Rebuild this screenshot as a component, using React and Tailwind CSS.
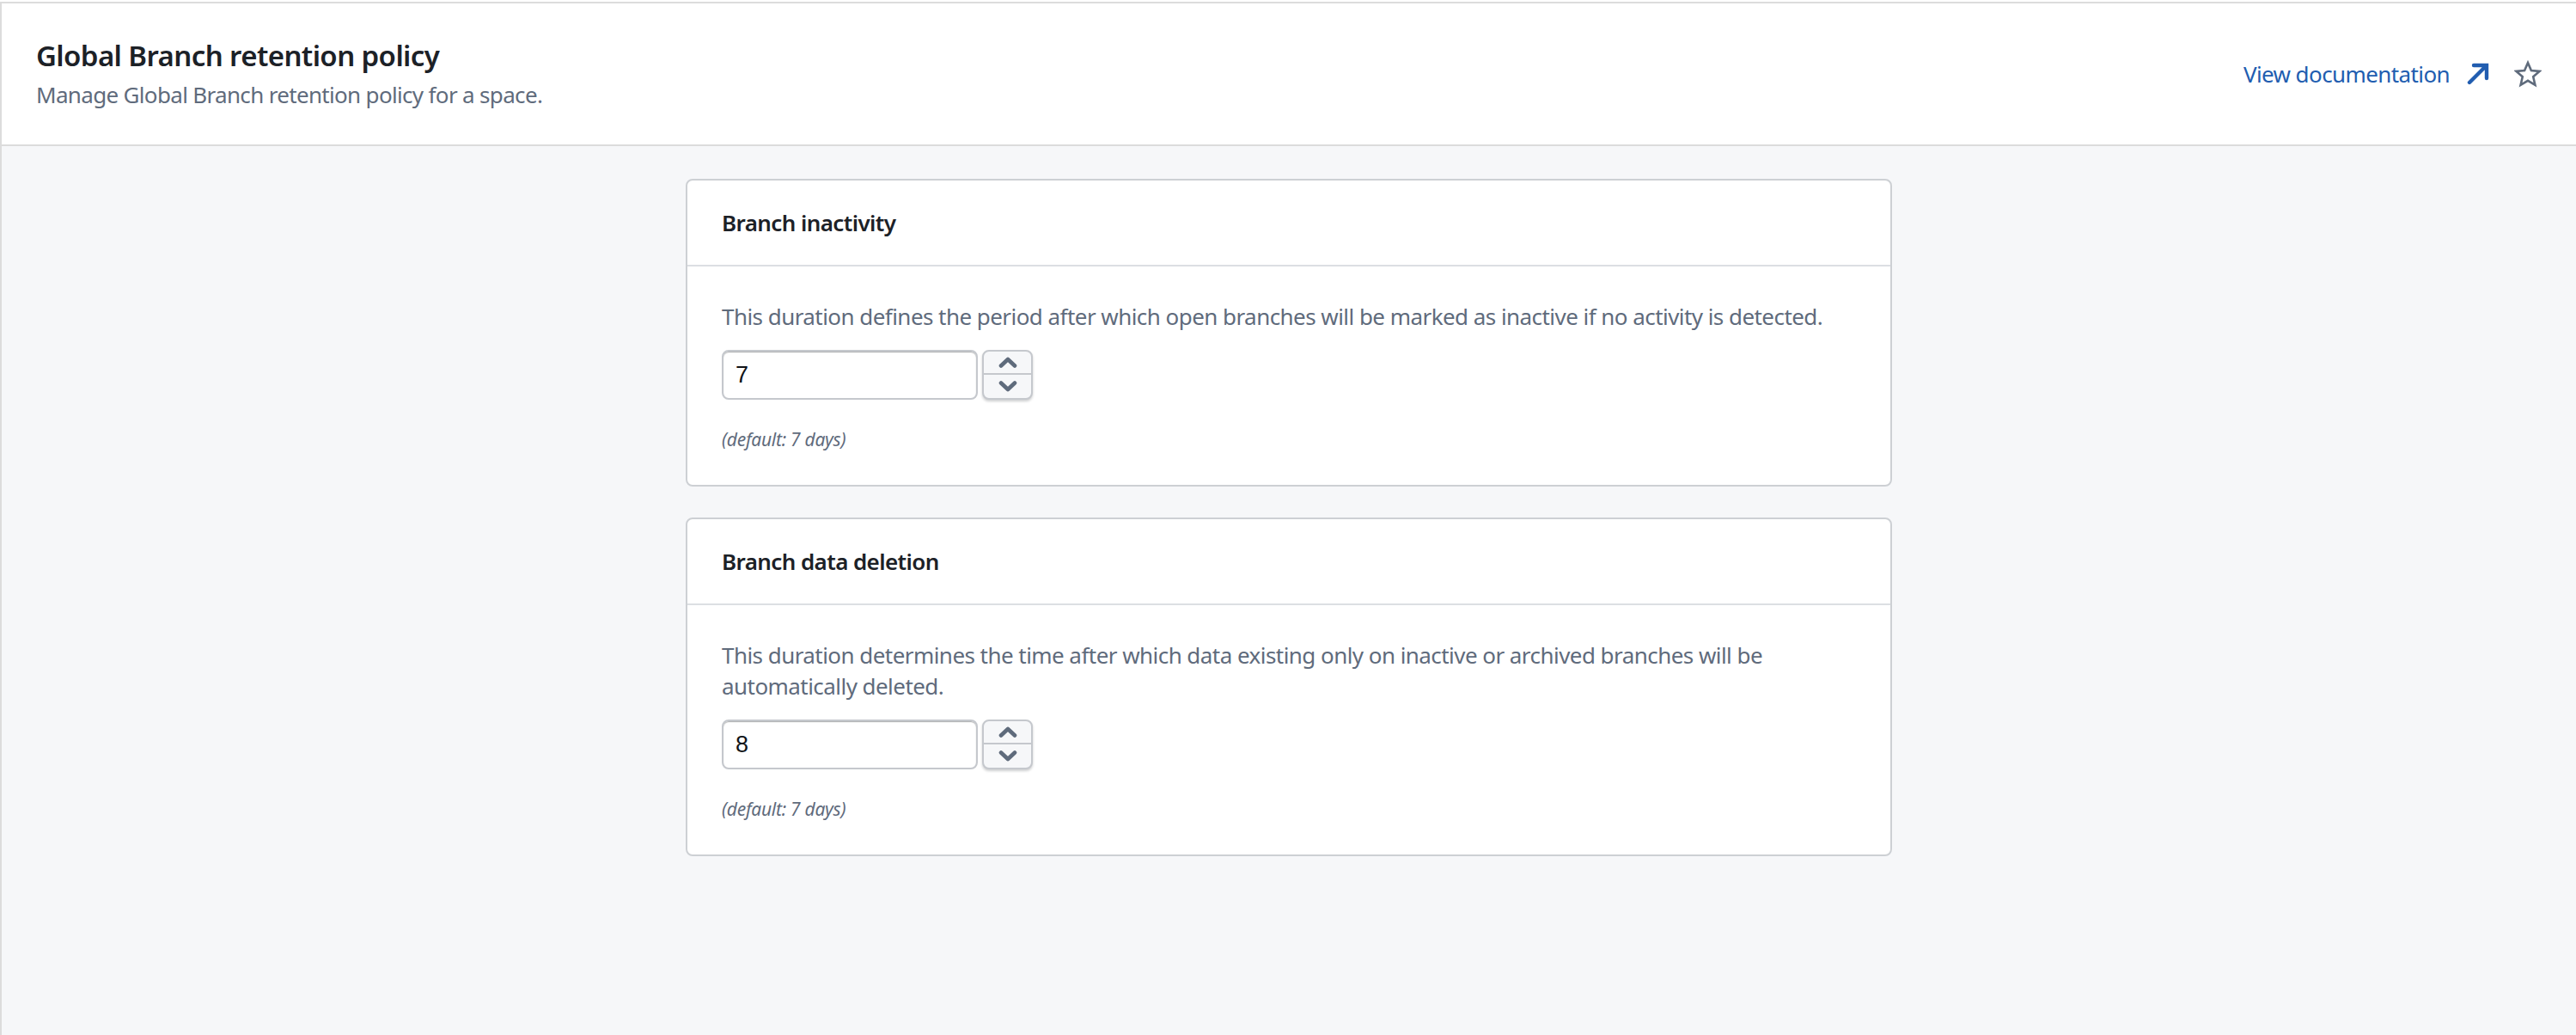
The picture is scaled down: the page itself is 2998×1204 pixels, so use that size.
import React from 'react';

const sans = 'font-["Noto_Sans",sans-serif]';

function Stepper() {
  return (
    <div className="ml-[5px] flex h-[58px] w-[59px] flex-col overflow-hidden rounded-[8px] border-2 border-[#c5c8cd] bg-[#f6f7f9] shadow-[0_2px_3px_rgba(17,20,24,0.2)]">
      <button className="flex h-[27px] items-center justify-center border-b-2 border-[#c5c8cd]">
        <svg width="22" height="13" viewBox="0 0 22 13" fill="none">
          <path d="M3 10.5 L11 3 L19 10.5" stroke="#5f6b7c" strokeWidth="4.6" strokeLinecap="round" strokeLinejoin="round" />
        </svg>
      </button>
      <button className="flex flex-1 items-center justify-center">
        <svg width="22" height="13" viewBox="0 0 22 13" fill="none">
          <path d="M3 2.5 L11 10 L19 2.5" stroke="#5f6b7c" strokeWidth="4.6" strokeLinecap="round" strokeLinejoin="round" />
        </svg>
      </button>
    </div>
  );
}

function PolicyCard({ title, value, children }) {
  return (
    <section className="w-[1404px] rounded-[8px] border-2 border-[#cdd0d4] bg-white">
      <h2 className="flex h-[100px] items-center border-b-2 border-[#dcdfe3] pl-[40px] text-[26px] font-semibold tracking-[-0.6px] text-[#1c2127]">
        {title}
      </h2>
      <div className="px-[40px] pt-[40px] pb-[38px]">
        <p className="text-[26px] leading-[36px] tracking-[-0.55px] text-[#5f6b7c]">{children}</p>
        <div className="mt-[21px] flex items-center">
          <div className="flex h-[58px] w-[298px] items-center rounded-[8px] border-2 border-[#c5c8cd] bg-white pl-[14px] font-['Liberation_Sans',sans-serif] text-[27px] text-[#111418] shadow-[inset_0_1px_1px_rgba(17,20,24,0.35)]">
            {value}
          </div>
          <Stepper />
        </div>
        <p className="mt-[31px] text-[21px] leading-[30px] tracking-[-0.27px] text-[#5f6b7c] italic">(default: 7 days)</p>
      </div>
    </section>
  );
}

export default function App() {
  return (
    <div className={`${sans} h-[1204px] overflow-hidden bg-white pt-[2px]`}>
      <div className="h-full border-t-2 border-l-2 border-[#dcdcdc] bg-[#f6f7f9]">
        <header className="flex h-[166px] items-center justify-between border-b-2 border-[#dcdcdc] bg-white pr-[40px] pl-[40px]">
          <div className="-mt-[1px]">
            <h1 className="text-[33px] leading-[46px] font-semibold tracking-[-0.6px] text-[#1c2127]">Global Branch retention policy</h1>
            <p className="mt-[3px] text-[26px] leading-[38px] tracking-[-0.67px] text-[#5f6b7c]">Manage Global Branch retention policy for a space.</p>
          </div>
          <div className="flex items-center">
            <a className="text-[26px] tracking-[-0.6px] text-[#215db0]">View documentation</a>
            <svg className="ml-[20px]" width="26" height="26" viewBox="0 0 26 26" fill="none">
              <path d="M3 23 L23 3 M8 3 H23 V18" stroke="#215db0" strokeWidth="4.4" strokeLinecap="round" strokeLinejoin="miter" />
            </svg>
            <svg className="ml-[29px]" width="32" height="32" viewBox="0 0 32 32" fill="none">
              <path d="M16 3 L19.9 12 L29.5 12.9 L22.2 19.3 L24.4 28.8 L16 23.8 L7.6 28.8 L9.8 19.3 L2.5 12.9 L12.1 12 Z" stroke="#5f6b7c" strokeWidth="2.6" strokeLinejoin="miter" />
            </svg>
          </div>
        </header>
        <main className="flex flex-col items-center gap-[36px] pt-[38px]">
          <PolicyCard title="Branch inactivity" value="7">
            This duration defines the period after which open branches will be marked as inactive if no activity is detected.
          </PolicyCard>
          <PolicyCard title="Branch data deletion" value="8">
            This duration determines the time after which data existing only on inactive or archived branches will be automatically deleted.
          </PolicyCard>
        </main>
      </div>
    </div>
  );
}
